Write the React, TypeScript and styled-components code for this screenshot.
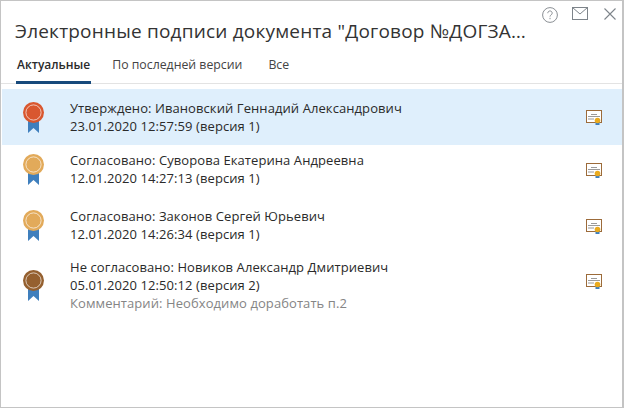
import { FC } from 'react';
import styled, { createGlobalStyle } from 'styled-components';

const GlobalStyle = createGlobalStyle`
  html, body {
    margin: 0;
    padding: 0;
    background: #fff;
  }
  * { box-sizing: border-box; }
`;

const Window = styled.div`
  width: 624px;
  height: 408px;
  border: 1px solid #c4c4c4;
  border-width: 1px 2px 1px 1px;
  background: #fff;
  font-family: "Open Sans", "Noto Sans", sans-serif;
  color: #262626;
  position: relative;
  overflow: hidden;
`;

const TopIcons = styled.div`
  position: absolute;
  top: 6px;
  right: 6px;
  display: flex;
  align-items: flex-start;
  gap: 14px;
`;

const CloseIcon = styled.svg`
  margin: 1px 0 0 2px;
`;

const Title = styled.h1`
  margin: 0;
  padding: 15px 0 0 14px;
  width: 530px;
  font-size: 19px;
  line-height: 30px;
  font-weight: 400;
  letter-spacing: 0.2px;
  color: #333;
  white-space: nowrap;
`;

const Tabs = styled.div`
  display: flex;
  height: 37px;
  margin-top: 1px;
  padding-left: 15px;
  gap: 16px;
  border-bottom: 1px solid #e3e3e3;
`;

const Tab = styled.div<{ $active?: boolean }>`
  height: 37px;
  padding: 9px ${({ $active }) => ($active ? '1px' : '5px')} 0;
  font-size: ${({ $active }) => ($active ? '12px' : '12.3px')};
  line-height: 18px;
  font-weight: ${({ $active }) => ($active ? 600 : 400)};
  color: ${({ $active }) => ($active ? '#2b2b2b' : '#444')};
  border-bottom: 3px solid ${({ $active }) => ($active ? '#174a7c' : 'transparent')};
`;

const List = styled.div`
  padding: 5px 0 0 1px;
`;

const Row = styled.div<{ $selected?: boolean; $after: number }>`
  display: flex;
  align-items: center;
  padding: ${({ $selected }) => ($selected ? '10px 0' : '0')};
  margin-bottom: ${({ $after }) => $after}px;
  background: ${({ $selected }) => ($selected ? '#dfeffc' : 'transparent')};
`;

const MedalBox = styled.div`
  width: 68px;
  flex: none;
  padding-left: 21px;
`;

const Info = styled.div`
  flex: 1;
  min-width: 0;
`;

const Line = styled.div<{ $muted?: boolean }>`
  font-size: 13px;
  line-height: 18px;
  letter-spacing: 0.08px;
  color: ${({ $muted }) => ($muted ? '#858585' : '#2a2a2a')};
  white-space: nowrap;
`;

const CertBox = styled.div<{ $shift: number }>`
  width: 36px;
  flex: none;
  padding-top: ${({ $shift }) => Math.max($shift, 0)}px;
  padding-bottom: ${({ $shift }) => Math.max(-$shift, 0)}px;
`;

const BlockSvg = styled.svg`
  display: block;
`;

const Medal: FC<{ color: string }> = ({ color }) => (
  <BlockSvg width="21" height="31" viewBox="0 0 21 31">
    <path d="M5 16 H16 V31 L10.5 26 L5 31 Z" fill="#3f7fbd" />
    <circle cx="10.5" cy="10.5" r="10.5" fill={color} />
    <circle cx="10.5" cy="10.5" r="7.6" fill={color} stroke="#fff" strokeOpacity="0.65" strokeWidth="1" />
  </BlockSvg>
);

const Cert: FC = () => (
  <BlockSvg width="17" height="15" viewBox="0 0 17 15">
    <rect x="0.5" y="0.5" width="15" height="12" fill="#fff" stroke="#9c6b3a" />
    <rect x="5" y="4" width="6" height="1" fill="#9a9a9a" />
    <rect x="2" y="6" width="12" height="1" fill="#9a9a9a" />
    <rect x="2" y="8.5" width="6" height="1" fill="#9a9a9a" />
    <rect x="9.5" y="11" width="4" height="4" fill="#3f7fbd" />
    <circle cx="11.5" cy="10.5" r="2.8" fill="#eaaa1e" />
  </BlockSvg>
);

const signatures = [
  { color: '#d9572f', title: 'Утверждено: Ивановский Геннадий Александрович', date: '23.01.2020 12:57:59 (версия 1)', after: 6, selected: true, certShift: 1 },
  { color: '#e2aa5a', title: 'Согласовано: Суворова Екатерина Андреевна', date: '12.01.2020 14:27:13 (версия 1)', after: 20, certShift: 3 },
  { color: '#e2aa5a', title: 'Согласовано: Законов Сергей Юрьевич', date: '12.01.2020 14:26:34 (версия 1)', after: 15, certShift: 3 },
  { color: '#95602f', title: 'Не согласовано: Новиков Александр Дмитриевич', date: '05.01.2020 12:50:12 (версия 2)', comment: 'Комментарий: Необходимо доработать п.2', after: 0, certShift: -7 },
];

export default function App() {
  return (
    <Window>
      <GlobalStyle />
      <TopIcons>
        <svg width="16" height="16" viewBox="0 0 16 16" fill="none" stroke="#8a8f94">
          <circle cx="8" cy="8" r="7.4" />
          <path d="M5.8 6.2c0-3 4.4-3 4.4 0 0 1.7-2.2 1.7-2.2 3.4M8 10.8v1.4" />
        </svg>
        <svg width="16" height="13" viewBox="0 0 16 13" fill="none" stroke="#7d848a">
          <rect x="0.5" y="0.5" width="15" height="12" />
          <path d="M0.5 0.5 L8 7 L15.5 0.5" />
        </svg>
        <CloseIcon width="12" height="12" viewBox="0 0 12 12" fill="none" stroke="#7d848a" strokeWidth="1.1">
          <path d="M0.5 0.5 L11.5 11.5 M11.5 0.5 L0.5 11.5" />
        </CloseIcon>
      </TopIcons>
      <Title>Электронные подписи документа "Договор №ДОГЗА…</Title>
      <Tabs>
        <Tab $active>Актуальные</Tab>
        <Tab>По последней версии</Tab>
        <Tab>Все</Tab>
      </Tabs>
      <List>
        {signatures.map((s) => (
          <Row key={s.date} $selected={s.selected} $after={s.after}>
            <MedalBox>
              <Medal color={s.color} />
            </MedalBox>
            <Info>
              <Line>{s.title}</Line>
              <Line>{s.date}</Line>
              {s.comment && <Line $muted>{s.comment}</Line>}
            </Info>
            <CertBox $shift={s.certShift}>
              <Cert />
            </CertBox>
          </Row>
        ))}
      </List>
    </Window>
  );
}
